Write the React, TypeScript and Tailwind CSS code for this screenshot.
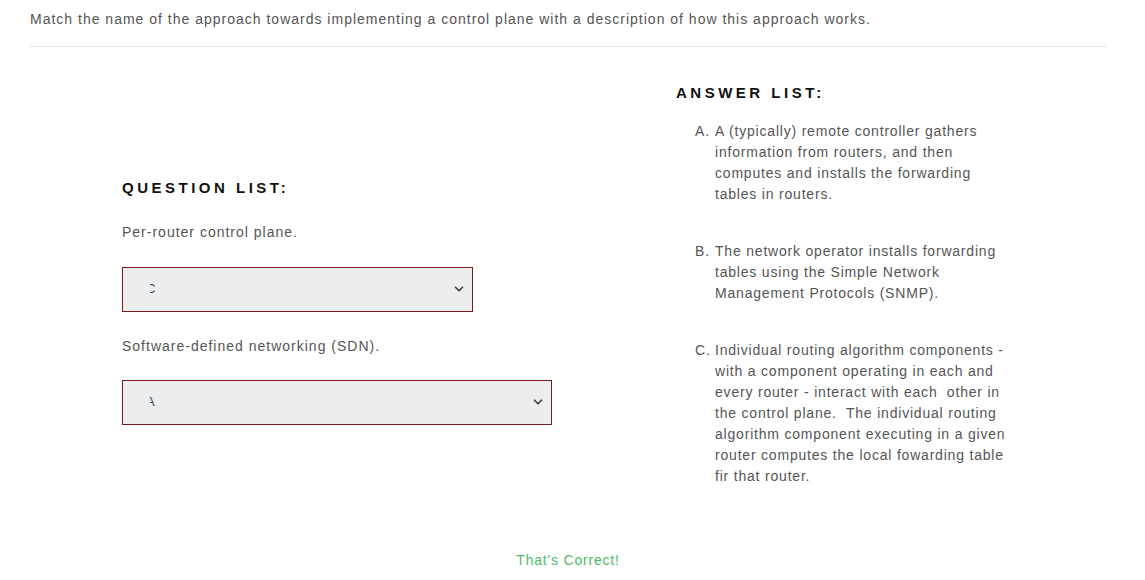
import { ChevronDown } from 'lucide-react';

const answers = [
  { key: 'A', text: 'A (typically) remote controller gathers information from routers, and then computes and installs the forwarding tables in routers.' },
  { key: 'B', text: 'The network operator installs forwarding tables using the Simple Network Management Protocols (SNMP).' },
  { key: 'C', text: 'Individual routing algorithm components - with a component operating in each and every router - interact with each\u00a0 other in the control plane.\u00a0 The individual routing algorithm component executing in a given router computes the local fowarding table fir that router.' },
];

function FakeSelect({ value, width }: { value: string; width: string }) {
  return (
    <div className={`${width} h-[45px] border border-[#7d1a1a] bg-[#ecedef] flex items-center pl-[27px] pr-[6px]`}>
      <span className="w-[6px] overflow-hidden text-[13px] text-[#444]">
        <span className="block -ml-[4px]">{value}</span>
      </span>
      <ChevronDown className="ml-auto w-[14px] h-[14px] text-[#444]" strokeWidth={3} />
    </div>
  );
}

function App() {
  return (
    <div className="bg-white w-[1145px] h-[580px] px-[30px] text-[14px] text-[#555] tracking-[1px]" style={{ fontFamily: '"Liberation Sans", Arial, sans-serif' }}>
      <div className="w-[1076px]">
        <div className="pt-[9px] pb-[16px] border-b border-[#e5e5e5]">
          Match the name of the approach towards implementing a control plane with a description of how this approach works.
        </div>
        <div className="grid grid-cols-[646px_1fr]">
          <div className="pl-[92px] pt-[130px]">
            <h2 className="text-[15px] font-bold text-[#111] tracking-[3.5px]">QUESTION LIST:</h2>
            <p className="mt-[22px]">Per-router control plane.</p>
            <div className="mt-[24px]">
              <FakeSelect value="C" width="w-[351px]" />
            </div>
            <p className="mt-[24px]">Software-defined networking (SDN).</p>
            <div className="mt-[23px]">
              <FakeSelect value="A" width="w-[430px]" />
            </div>
          </div>
          <div className="pt-[35px]">
            <h2 className="text-[15px] font-bold text-[#111] tracking-[3.5px]">ANSWER LIST:</h2>
            <ol className="mt-[16px] ml-[19px] flex flex-col gap-[36px] tracking-[0.8px]">
              {answers.map((a) => (
                <li key={a.key} className="flex leading-[21px]">
                  <span className="w-[20px] shrink-0">{a.key}.</span>
                  <span className="w-[302px]">{a.text}</span>
                </li>
              ))}
            </ol>
          </div>
        </div>
        <div className="mt-[63px] text-center text-[#4fbb68] tracking-[0.8px]">That's Correct!</div>
      </div>
    </div>
  );
}

export default App;
